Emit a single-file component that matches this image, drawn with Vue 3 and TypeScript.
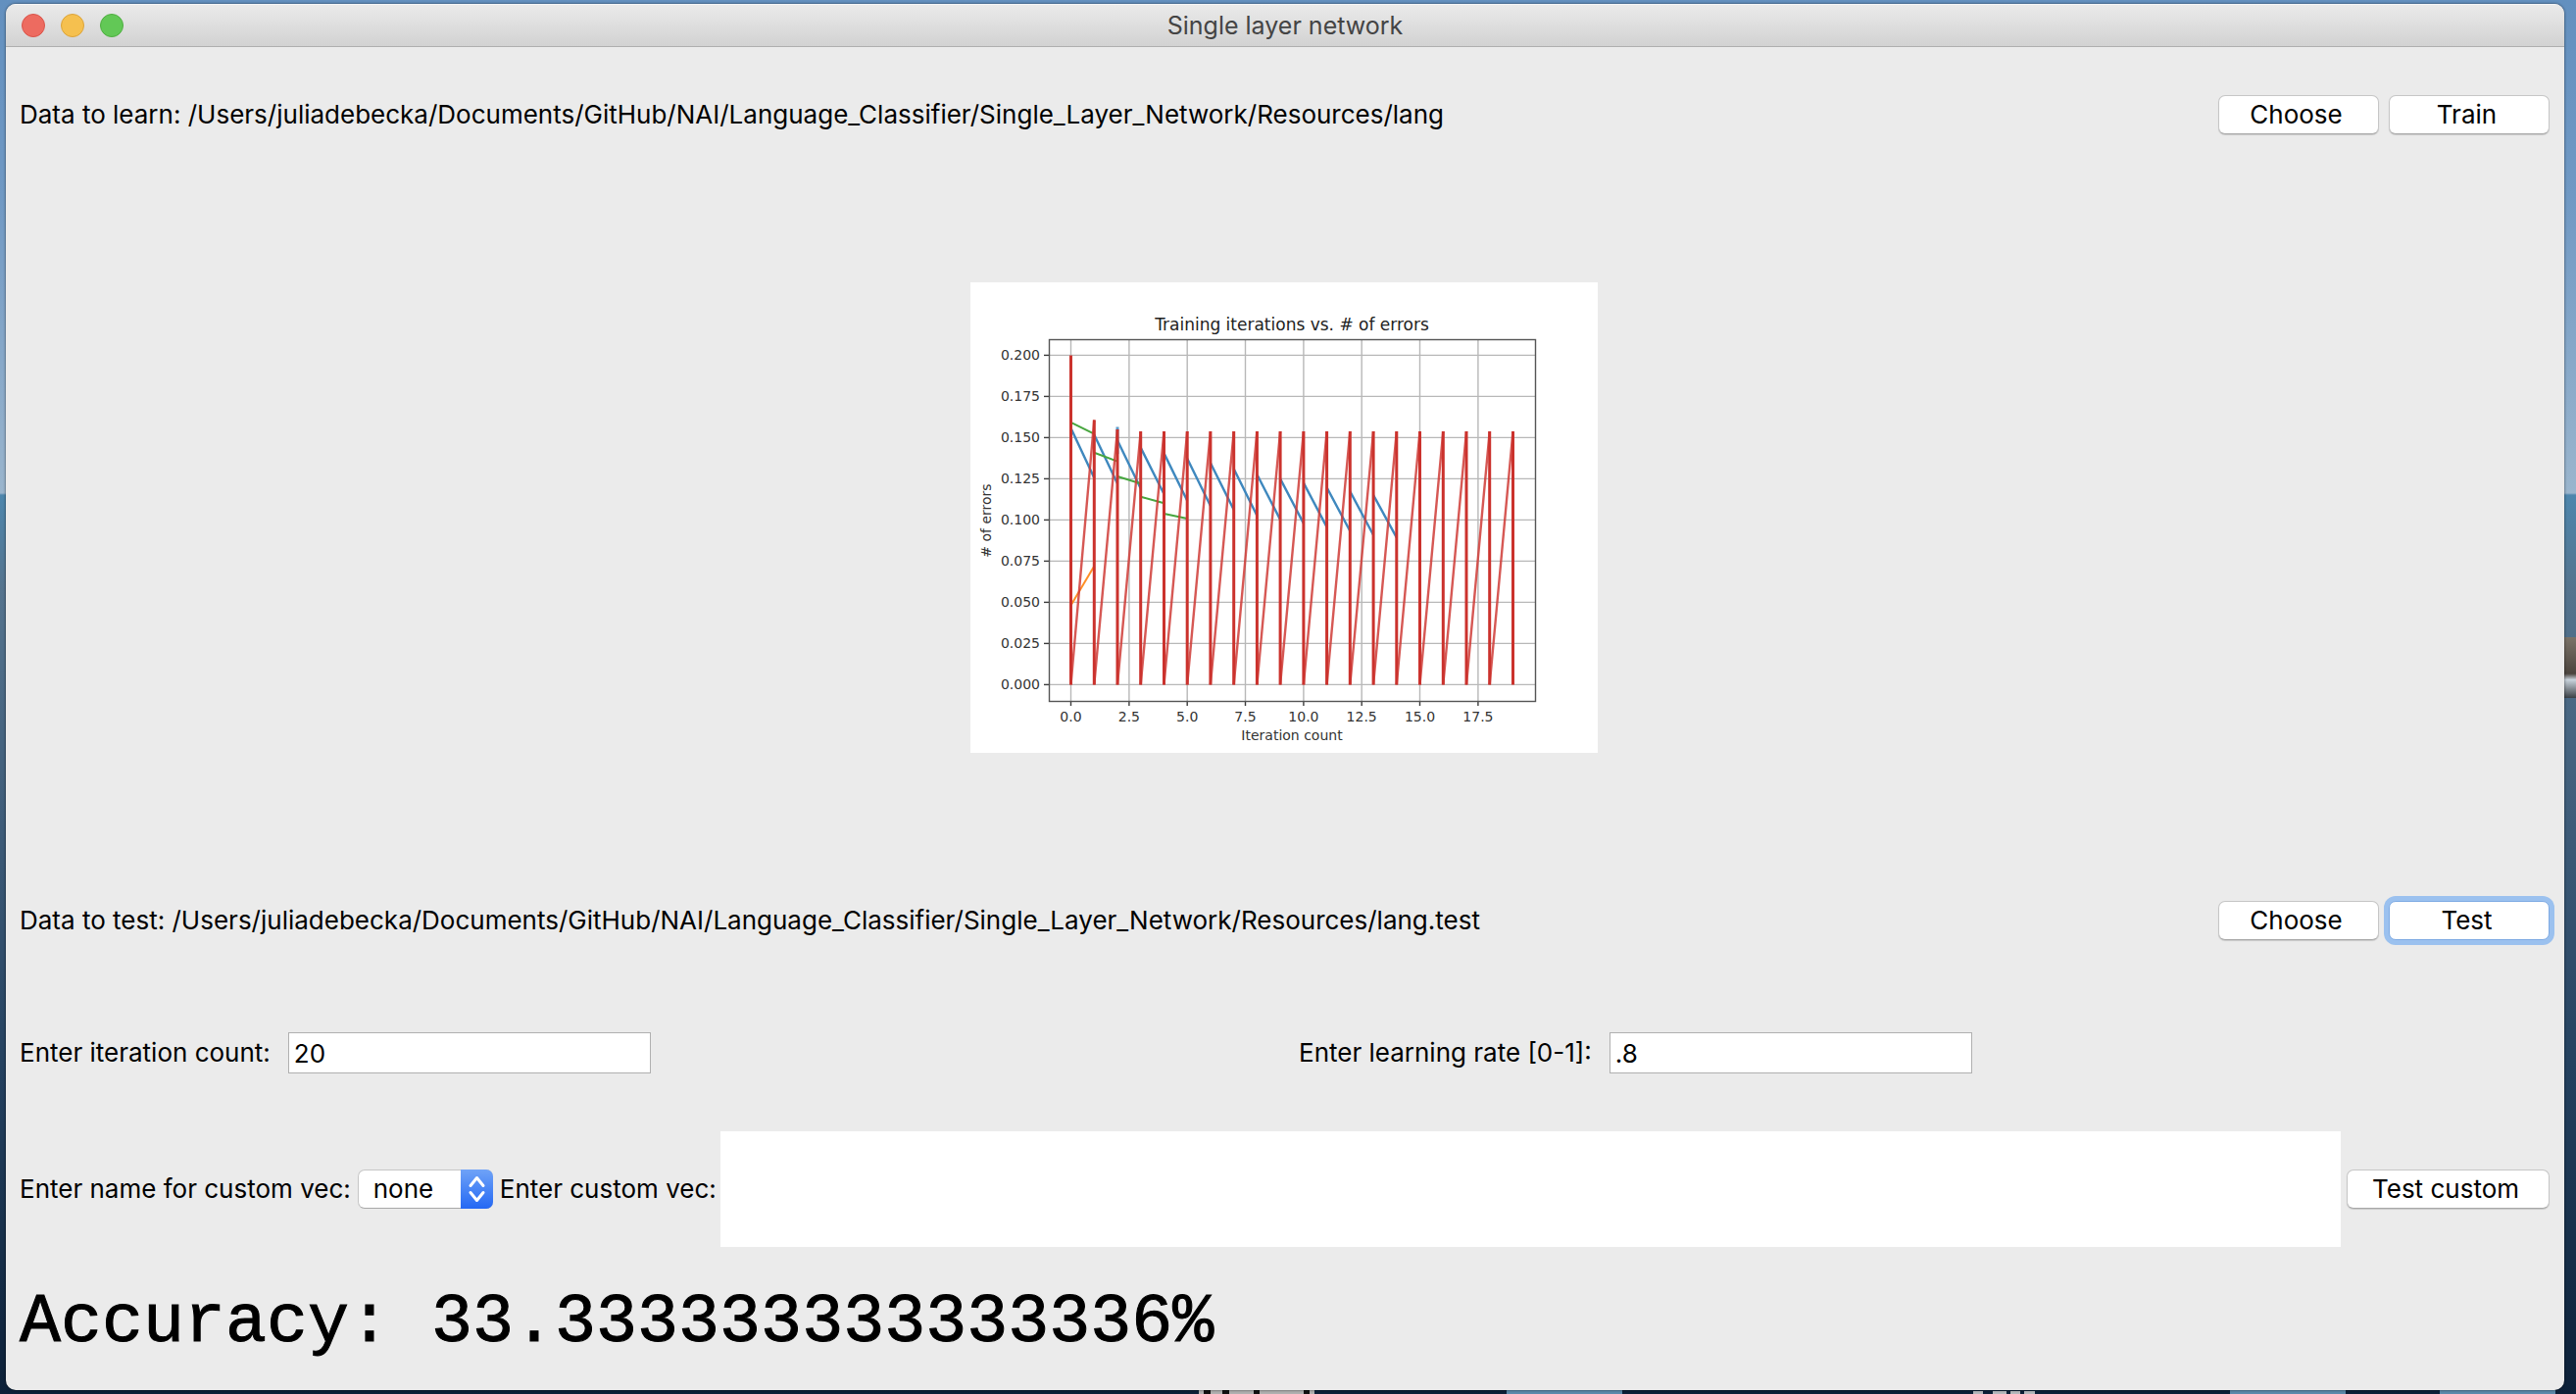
<script setup lang="ts">
import { ref } from 'vue'

type Point = [number, number]

const iterations = ref('20')
const rate = ref('.8')
const vecName = ref('none')
const customVec = ref('')

const axes = { left: 80, right: 576, top: 58, bottom: 427 }

const px = (v: number): number => Math.round((80 + ((v + 0.95) / 20.9) * 496) * 10) / 10
const py = (v: number): number => Math.round((427.2 - ((v + 0.01) / 0.22) * 369.6) * 10) / 10

const xTicks = [0, 2.5, 5, 7.5, 10, 12.5, 15, 17.5]
const yTicks = [0, 0.025, 0.05, 0.075, 0.1, 0.125, 0.15, 0.175, 0.2]

const blue: Point[] = [
  [0.1558, 0.1256], [0.1518, 0.1221], [0.1483, 0.1191], [0.1439, 0.1157], [0.1405, 0.1117],
  [0.1373, 0.1086], [0.1346, 0.1062], [0.131, 0.1026], [0.1276, 0.1002], [0.125, 0.0979],
  [0.1225, 0.0957], [0.1197, 0.0933], [0.1173, 0.0909], [0.1151, 0.0893],
]
const green: Point[] = [
  [0.1592, 0.1522], [0.1409, 0.1356], [0.1264, 0.1221], [0.1141, 0.1102], [0.1038, 0.1008],
]
const orange: Point[] = [[0.0482, 0.0719]]

const peaks: number[] = Array.from({ length: 20 }, (_, i) =>
  i === 0 ? 0.2 : i === 1 ? 0.1607 : i === 2 ? 0.155 : 0.1538,
)

const segments = (rows: Point[]): string =>
  rows.map(([a, b], i) => `M${px(i)} ${py(a)}L${px(i + 1)} ${py(b)}`).join('')

const slopes = peaks.slice(1).map((p, i) => `M${px(i)} ${py(0)}L${px(i + 1)} ${py(p)}`).join('')
const spikes = peaks.map((p, i) => `M${px(i)} ${py(p)}V${py(0)}`).join('')
</script>

<template>
  <div class="desktop">
    <main class="window">
      <header class="titlebar">
        <div class="lights">
          <button class="light close" type="button" aria-label="Close"></button>
          <button class="light minimise" type="button" aria-label="Minimise"></button>
          <button class="light zoom" type="button" aria-label="Zoom"></button>
        </div>
        <h1 class="title">Single layer network</h1>
      </header>

      <section class="row file-row">
        <p class="path">Data to learn: /Users/juliadebecka/Documents/GitHub/NAI/Language_Classifier/Single_Layer_Network/Resources/lang</p>
        <div class="actions">
          <button class="btn" type="button">Choose</button>
          <button class="btn" type="button">Train</button>
        </div>
      </section>

      <section class="chart-row">
        <svg class="chart" viewBox="0 0 640 480" role="img" aria-label="Training iterations vs. # of errors">
          <rect width="640" height="480" fill="#fff" />
          <g stroke="#b8b8b8" stroke-width="1.4">
            <line v-for="t in xTicks" :key="t" :x1="px(t)" :x2="px(t)" :y1="axes.top" :y2="axes.bottom" />
            <line v-for="t in yTicks" :key="t" :x1="axes.left" :x2="axes.right" :y1="py(t)" :y2="py(t)" />
          </g>
          <g fill="none" stroke-width="2">
            <path :d="`M${px(2)} ${py(0.1565)}V${py(0.14)}`" stroke="#5b9bcb" stroke-width="3" />
            <path :d="segments(blue)" stroke="#3f88be" stroke-width="2.4" />
            <path :d="segments(orange)" stroke="#ff8f26" />
            <path :d="segments(green)" stroke="#47a63f" />
            <path :d="slopes" stroke="#cf3b36" stroke-width="2.4" stroke-opacity="0.85" />
            <path :d="spikes" stroke="#cb322d" stroke-width="3" />
          </g>
          <g stroke="#3c3c3c" stroke-width="1.4">
            <line v-for="t in xTicks" :key="t" :x1="px(t)" :x2="px(t)" :y1="axes.bottom" y2="432" />
            <line v-for="t in yTicks" :key="t" x1="75" :x2="axes.left" :y1="py(t)" :y2="py(t)" />
            <rect x="80.5" y="58.5" width="496" height="369" fill="none" stroke="#555" />
          </g>
          <g class="tick">
            <text v-for="t in xTicks" :key="t" :x="px(t)" y="448" text-anchor="middle">{{ t.toFixed(1) }}</text>
            <text v-for="t in yTicks" :key="t" x="71" :y="py(t) + 5" text-anchor="end">{{ t.toFixed(3) }}</text>
            <text x="328" y="467" text-anchor="middle">Iteration count</text>
            <text transform="translate(21 243) rotate(-90)" text-anchor="middle"># of errors</text>
          </g>
          <text class="chart-title" x="328" y="49" text-anchor="middle">Training iterations vs. # of errors</text>
        </svg>
      </section>

      <section class="row file-row">
        <p class="path">Data to test: /Users/juliadebecka/Documents/GitHub/NAI/Language_Classifier/Single_Layer_Network/Resources/lang.test</p>
        <div class="actions">
          <button class="btn" type="button">Choose</button>
          <button class="btn focused" type="button">Test</button>
        </div>
      </section>

      <section class="params">
        <div class="param">
          <label for="iterations">Enter iteration count:</label>
          <input id="iterations" v-model="iterations" class="field" type="text" />
        </div>
        <div class="param">
          <label for="rate">Enter learning rate [0-1]:</label>
          <input id="rate" v-model="rate" class="field" type="text" />
        </div>
      </section>

      <section class="row custom-row">
        <label for="vec-name">Enter name for custom vec:</label>
        <div class="popup">
          <select id="vec-name" v-model="vecName">
            <option value="none">none</option>
          </select>
          <svg class="stepper" viewBox="0 0 33 40" aria-hidden="true">
            <path d="M10 16.500l6.500-8 6.500 8M10 23.500l6.500 8 6.500-8" fill="none" stroke="#fff" stroke-width="3" stroke-linecap="round" stroke-linejoin="round" />
          </svg>
        </div>
        <label for="custom-vec">Enter custom vec:</label>
        <textarea id="custom-vec" v-model="customVec" class="vec"></textarea>
        <button class="btn wide" type="button">Test custom</button>
      </section>

      <p class="accuracy">Accuracy: 33.333333333333336%</p>
    </main>
  </div>
</template>

<style>
body {
  margin: 0;
}
</style>

<style scoped>
/* The wallpaper, with the tops of the desktop icons showing below the window. */
.desktop {
  box-sizing: border-box;
  display: flex;
  min-height: 100vh;
  padding: 4px 12px 4px 6px;
  background:
    linear-gradient(#5b8aab, #5b8aab) calc(100% - 21px) 100% / 118px 4px no-repeat,
    linear-gradient(#5b8aab, #5b8aab) calc(100% - 235px) 100% / 118px 4px no-repeat,
    linear-gradient(#5b8aab, #5b8aab) 1537px 100% / 118px 4px no-repeat,
    linear-gradient(90deg, #b4b8bc 10px, transparent 10px 20px, #b4b8bc 20px 34px, transparent 34px 38px, #b4b8bc 38px 48px, transparent 48px 52px, #b4b8bc 52px) 2013px 100% / 63px 3px no-repeat,
    linear-gradient(90deg, #b0b0b0 5px, #111 5px 12px, #b0b0b0 12px 24px, #111 24px 31px, #b0b0b0 31px 56px, #111 56px 62px, #b0b0b0 62px 107px, #111 107px 113px, #b0b0b0 113px) 1223px 100% / 118px 4px no-repeat,
    linear-gradient(#7b7368, #4b443e 60%, #c9d3dc 70%, #3a4045) 100% 650px / 12px 62px no-repeat,
    linear-gradient(#6390bf 0, #7099c4 200px, #9ab5cd 503px, #4d86ad 505px, #55748e 600px, #3d5b78 850px, #23405e 1100px, #0c2038 1422px);
  color: #000;
  font-family: Inter, "Noto Sans", sans-serif;
  font-size: 26px;
  line-height: 32px;
}

.window {
  display: flex;
  flex: 1;
  flex-direction: column;
  min-width: 0;
  overflow: hidden;
  border-radius: 10px;
  background: #ebebeb;
  box-shadow: 0 0 3px rgba(0, 0, 0, 0.6);
}

.titlebar {
  box-sizing: border-box;
  display: grid;
  grid-template-columns: 1fr auto 1fr;
  align-items: center;
  height: 44px;
  padding: 0 16px;
  border-top: 1px solid #f6f6f6;
  border-bottom: 1px solid #aeaeae;
  background: linear-gradient(#eaeaea, #d2d2d2);
}

.lights {
  display: flex;
  gap: 16px;
}

.light {
  width: 24px;
  height: 24px;
  padding: 0;
  border: 1px solid;
  border-radius: 50%;
}

.close {
  border-color: #d9544a;
  background: #ed6b60;
}

.minimise {
  border-color: #dba33a;
  background: #f5c04f;
}

.zoom {
  border-color: #4fae41;
  background: #62c856;
}

.title {
  margin: 0;
  color: #444;
  font-size: 25px;
  font-weight: 400;
}

.row {
  display: flex;
  align-items: center;
  padding: 0 15px 0 14px;
}

.file-row {
  justify-content: space-between;
  min-height: 138px;
}

.path {
  margin: 0;
  white-space: nowrap;
}

.actions {
  display: flex;
  gap: 10px;
}

.btn {
  box-sizing: border-box;
  width: 164px;
  height: 40px;
  padding: 0 5px 0 0;
  border: 1px solid #c6c6c6;
  border-bottom-color: #a8a8a8;
  border-radius: 7px;
  background: #fff;
  box-shadow: 0 1px 1px rgba(0, 0, 0, 0.15);
  color: #000;
  font: inherit;
  white-space: nowrap;
}

.focused {
  border-color: #7fabe3;
  box-shadow: 0 0 0 5px #9bc1ef;
}

.wide {
  flex: none;
  width: 207px;
}

.chart-row {
  display: flex;
  flex: 1;
  align-items: center;
  justify-content: center;
  padding: 24px 2px 24px 0;
}

.chart {
  display: block;
  width: 640px;
  height: 480px;
  font-family: "DejaVu Sans", sans-serif;
}

.tick {
  fill: #333;
  font-size: 14px;
}

.chart-title {
  fill: #222;
  font-size: 17px;
}

.params {
  display: grid;
  grid-template-columns: 1fr 1fr;
  min-height: 132px;
}

.param {
  display: flex;
  align-items: center;
  gap: 18px;
  padding-left: 14px;
}

.field {
  box-sizing: border-box;
  width: 370px;
  height: 42px;
  padding: 0 5px;
  border: 1px solid #b0b0b0;
  outline: 0;
  background: #fff;
  color: #000;
  font: inherit;
}

.custom-row {
  min-height: 146px;
}

.custom-row label {
  flex: none;
}

.popup {
  display: grid;
  flex: none;
  width: 138px;
  height: 40px;
  margin: 0 7px;
}

.popup select {
  grid-area: 1 / 1;
  box-sizing: border-box;
  width: 100%;
  height: 40px;
  padding: 0 36px 0 15px;
  border: 1px solid #c6c6c6;
  border-bottom-color: #a8a8a8;
  border-radius: 7px;
  appearance: none;
  background: #fff;
  color: #000;
  font: inherit;
}

.stepper {
  grid-area: 1 / 1;
  justify-self: end;
  width: 33px;
  height: 40px;
  border-radius: 0 7px 7px 0;
  background: linear-gradient(#6fa3f7, #2468f4);
  pointer-events: none;
}

.vec {
  box-sizing: border-box;
  flex: 1;
  min-width: 0;
  height: 118px;
  margin: 0 6px 0 4px;
  padding: 4px;
  border: 0;
  outline: 0;
  resize: none;
  background: #fff;
  font: inherit;
}

.accuracy {
  margin: 0;
  padding: 24px 14px 28px;
  font-family: Courier, "Courier New", "Liberation Mono", monospace;
  font-size: 70px;
  line-height: 80px;
  -webkit-text-stroke: 1px #000;
}
</style>
